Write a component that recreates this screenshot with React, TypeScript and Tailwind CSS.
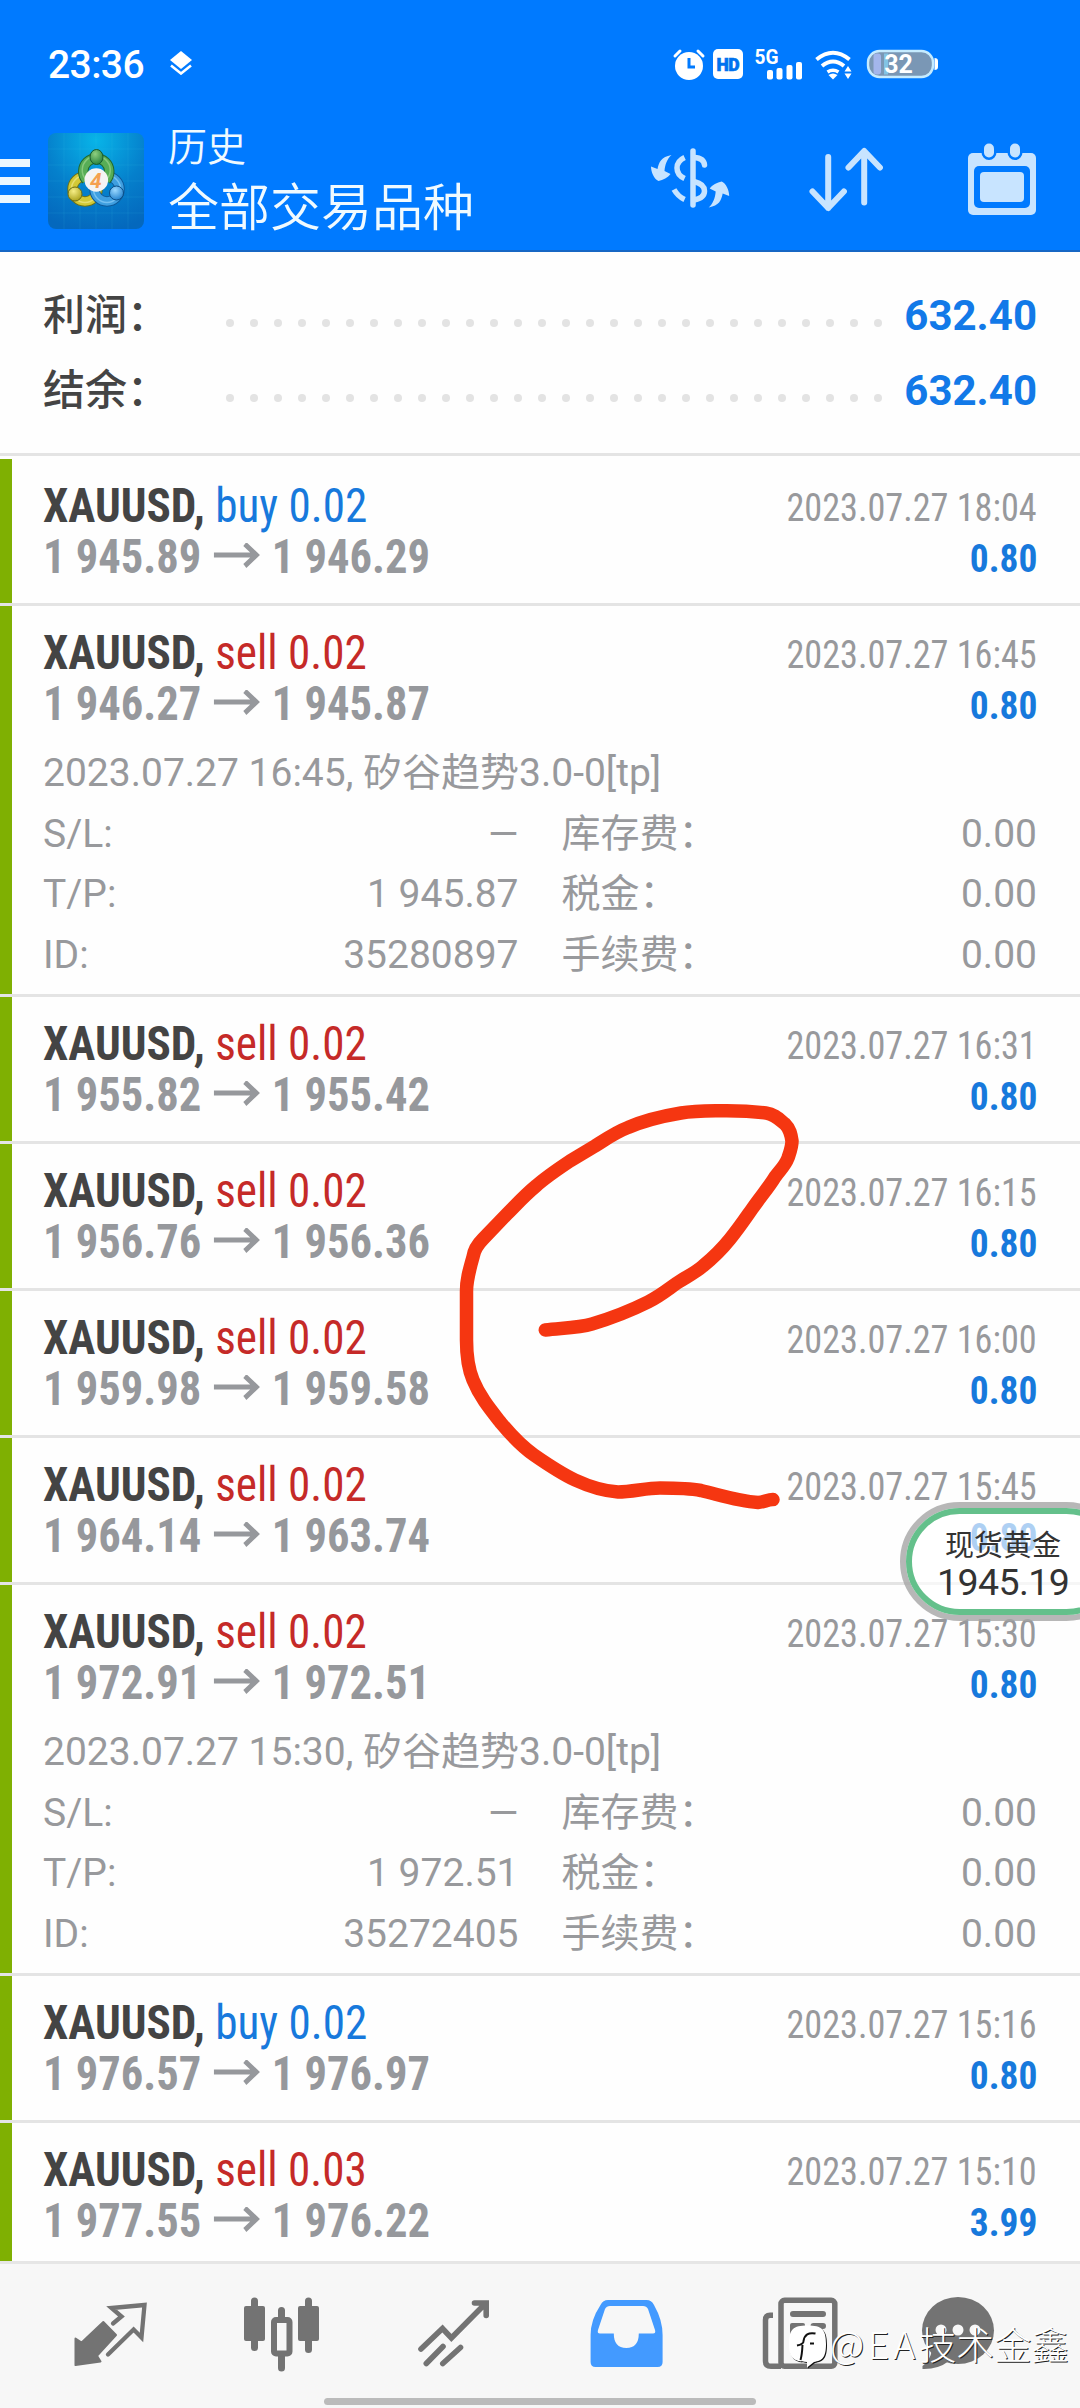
import type { ReactNode } from "react";

type Detail = { comment: string; tp: string; id: string };
type Deal = {
  side: "buy" | "sell";
  lots: string;
  open: string;
  close: string;
  time: string;
  profit: string;
  detail?: Detail;
};

const deals: Deal[] = [
  { side: "buy", lots: "0.02", open: "1 945.89", close: "1 946.29", time: "2023.07.27 18:04", profit: "0.80" },
  {
    side: "sell", lots: "0.02", open: "1 946.27", close: "1 945.87", time: "2023.07.27 16:45", profit: "0.80",
    detail: { comment: "2023.07.27 16:45, 矽谷趋势3.0-0[tp]", tp: "1 945.87", id: "35280897" },
  },
  { side: "sell", lots: "0.02", open: "1 955.82", close: "1 955.42", time: "2023.07.27 16:31", profit: "0.80" },
  { side: "sell", lots: "0.02", open: "1 956.76", close: "1 956.36", time: "2023.07.27 16:15", profit: "0.80" },
  { side: "sell", lots: "0.02", open: "1 959.98", close: "1 959.58", time: "2023.07.27 16:00", profit: "0.80" },
  { side: "sell", lots: "0.02", open: "1 964.14", close: "1 963.74", time: "2023.07.27 15:45", profit: "0.80" },
  {
    side: "sell", lots: "0.02", open: "1 972.91", close: "1 972.51", time: "2023.07.27 15:30", profit: "0.80",
    detail: { comment: "2023.07.27 15:30, 矽谷趋势3.0-0[tp]", tp: "1 972.51", id: "35272405" },
  },
  { side: "buy", lots: "0.02", open: "1 976.57", close: "1 976.97", time: "2023.07.27 15:16", profit: "0.80" },
  { side: "sell", lots: "0.03", open: "1 977.55", close: "1 976.22", time: "2023.07.27 15:10", profit: "3.99" },
];

function StatusBar() {
  return (
    <div className="flex h-[112px] items-center pl-12 pt-[17px]">
      <span className="w-[122px] text-[39px] leading-10 font-medium tracking-[-0.6px]">23:36</span>
      <svg width="22" height="24" viewBox="0 0 22 24" className="mb-1" fill="#fff">
        <path d="M11 0 22 9 11 18 0 9z" />
        <path d="M1 14.5 11 22.5 21 14.5" fill="none" stroke="#fff" strokeWidth="2.6" />
      </svg>
      <svg width="270" height="48" viewBox="672 40 270 48" className="ml-[479px]" fill="#fff">
        <circle cx="690" cy="65" r="14" />
        <path d="M676 55 681 50M704 55 699 50" stroke="#fff" strokeWidth="3" strokeLinecap="round" />
        <path d="M690 57v9h6" fill="none" stroke="#007aff" strokeWidth="3" />
        <rect x="714" y="48" width="30" height="30" rx="5" />
        <text x="729" y="69.5" textAnchor="middle" fontSize="17.5" fontWeight="900" fill="#0072ee" stroke="#0072ee" strokeWidth=".6" textLength="23">HD</text>
        <text x="755.5" y="62.5" fontSize="20" fontWeight="700" textLength="24" lengthAdjust="spacingAndGlyphs">5G</text>
        <rect x="768" y="69" width="6" height="9.500" rx="2" />
        <rect x="777.500" y="67" width="6" height="11.500" rx="2" />
        <rect x="787.500" y="64" width="6" height="14.500" rx="2" />
        <rect x="797" y="61" width="6" height="17.500" rx="2" />
        <g fill="none" stroke="#fff" strokeWidth="4">
          <path d="M817.500 58.500Q834 45 850.500 58.500" />
          <path d="M823 65Q834 56 845 65" />
          <path d="M828.500 71Q834 67.500 839.500 71" strokeWidth="3.500" />
        </g>
        <path d="M829.500 74Q834 71 838.500 74L834 78.500z" />
        <path d="M849 65 852.500 70.500h-7zM849 78 852.500 72.500h-7z" />
        <rect x="869" y="50" width="65" height="26" rx="11.500" fill="#7a97b5" stroke="#c5ebff" strokeWidth="2.400" />
        <rect x="874.500" y="52.500" width="7.500" height="21" rx="3" fill="#a3b6ec" />
        <rect x="885" y="52.500" width="4" height="21" fill="#82c3e4" />
        <path d="M935.500 57q3.500 0 3.500 3v6q0 3-3.500 3z" />
        <text x="899.500" y="72" textAnchor="middle" fontSize="25" fontWeight="700">32</text>
      </svg>
    </div>
  );
}

function AppLogo() {
  return (
    <svg width="96" height="96" viewBox="0 0 96 96" className="ml-[18px]">
      <defs>
        <radialGradient id="tile" cx=".5" cy=".08" r=".95">
          <stop offset="0" stopColor="#08b4e8" />
          <stop offset=".55" stopColor="#0580cc" />
          <stop offset="1" stopColor="#0468bd" />
        </radialGradient>
        <radialGradient id="g" cx=".4" cy=".3" r=".8">
          <stop offset="0" stopColor="#8fcf80" />
          <stop offset="1" stopColor="#1c7a35" />
        </radialGradient>
        <radialGradient id="y" cx=".4" cy=".3" r=".8">
          <stop offset="0" stopColor="#f6ee86" />
          <stop offset="1" stopColor="#a39a10" />
        </radialGradient>
        <radialGradient id="b" cx=".4" cy=".3" r=".8">
          <stop offset="0" stopColor="#9ad8ff" />
          <stop offset="1" stopColor="#1679c9" />
        </radialGradient>
      </defs>
      <rect width="96" height="96" rx="8" fill="url(#tile)" />
      <path d="M16 0v96M32 0v96M48 0v96M64 0v96M80 0v96M0 16h96M0 32h96M0 48h96M0 64h96M0 80h96" stroke="#4cc6f2" strokeOpacity=".12" strokeWidth="1" />
      <g fill="none">
        <circle cx="37" cy="56" r="12.500" stroke="#6d7218" strokeWidth="10.500" />
        <circle cx="37" cy="56" r="12.500" stroke="#d3c936" strokeWidth="8.500" />
        <circle cx="37" cy="56" r="13.500" stroke="#e6de72" strokeWidth="1.500" />
        <circle cx="59" cy="56" r="12.500" stroke="#0e5a9a" strokeWidth="10.500" />
        <circle cx="59" cy="56" r="12.500" stroke="#3f9fe0" strokeWidth="8.500" />
        <circle cx="59" cy="56" r="13.500" stroke="#74c0f2" strokeWidth="1.500" />
        <path d="M38.500 47A13 13 0 1 1 58 47" stroke="#22692f" strokeWidth="10.500" />
        <path d="M38.500 47A13 13 0 1 1 58 47" stroke="#57ad56" strokeWidth="8.500" />
        <path d="M37.500 46A14 14 0 1 1 59 46" stroke="#86c87c" strokeWidth="1.500" />
      </g>
      <ellipse cx="48.500" cy="24" rx="6.500" ry="7.500" fill="url(#g)" stroke="#175a2c" strokeWidth="1" />
      <circle cx="27" cy="61" r="7" fill="url(#y)" stroke="#6c6c14" strokeWidth="1" />
      <circle cx="68.500" cy="60" r="7" fill="url(#b)" stroke="#0b4d86" strokeWidth="1" />
      <circle cx="48.300" cy="47" r="11.800" fill="#f4f3f4" />
      <text x="47.800" y="54.500" textAnchor="middle" fontSize="21" fontWeight="700" fontStyle="italic" fill="#f5a050">4</text>
    </svg>
  );
}

function Header() {
  const swap =
    "M671.500 155C661 157 659 162 657.500 169L651 166.500C651 172 654 179 658.500 181C663 180 668 177.500 670.500 174L664.500 171C665 165 667 159 671.500 155z";
  return (
    <header className="h-[252px] shrink-0 border-b-2 border-[#1767c4] bg-[#007aff] text-white">
      <StatusBar />
      <div className="flex h-[138px] items-center pr-9">
        <div className="flex flex-col gap-[10px]">
          <i className="h-2 w-[30px] bg-[#ebf7ff]" />
          <i className="h-2 w-[30px] bg-[#ebf7ff]" />
          <i className="h-2 w-[30px] bg-[#ebf7ff]" />
        </div>
        <AppLogo />
        <div className="ml-6 flex flex-col pb-[15px] font-['Noto_Sans_CJK_SC',sans-serif] font-[350] text-[#f0faff]">
          <span className="text-[39px] leading-[60px]">历史</span>
          <span className="text-[51px] leading-[60px]">全部交易品种</span>
        </div>
        <div className="ml-auto flex gap-[72px]">
          <svg width="84" height="84" viewBox="648 139 84 84" fill="#c8e4ff">
            <path d={swap} />
            <path d={swap} transform="rotate(180 690.1 181.2)" />
            <g fill="none" stroke="#c8e4ff" strokeWidth="5.500">
              <path d="M693 151v54" strokeLinecap="round" />
              <path d="M694 157.500Q704 158 704.500 165" strokeLinecap="round" />
              <path d="M694 181.500Q704.500 184 704.500 191Q704.500 198 694 200" />
              <path d="M684.600 157.500Q677 161 677 168Q677 175 684.600 178.500" />
              <path d="M674 189.500Q678 196.500 684.600 199.500" />
            </g>
          </svg>
          <svg width="84" height="84" viewBox="804 139 84 84" fill="none" stroke="#c8e4ff" strokeWidth="6" strokeLinecap="round" strokeLinejoin="round">
            <path d="M828.200 157v51M812.500 191.500 828.200 208 843.900 191.500" />
            <path d="M864.200 202.500v-51M848.500 167.500 864.200 151 879.900 167.500" />
          </svg>
          <svg width="84" height="84" viewBox="960 139 84 84" fill="#c8e4ff">
            <rect x="968" y="153" width="68" height="62" rx="5" />
            <rect x="974" y="166" width="56" height="42" rx="5" fill="#007aff" />
            <rect x="980" y="172" width="44" height="30" rx="4" />
            <g stroke="#007aff" strokeWidth="5" paintOrder="stroke">
              <rect x="984" y="143.500" width="10" height="14" rx="5" />
              <rect x="1010" y="143.500" width="10" height="14" rx="5" />
            </g>
          </svg>
        </div>
      </div>
    </header>
  );
}

function SummaryRow({ label, value }: { label: string; value: string }) {
  return (
    <div className="flex h-[75px] items-center justify-between">
      <span className="w-[183px] pb-[2px] font-['Noto_Sans_CJK_SC',sans-serif] text-[42px] leading-[73px] font-medium text-[#444]">{label}</span>
      <div className="mt-[20px] mr-auto flex gap-4">
        {Array.from({ length: 28 }, (_, i) => (
          <i key={i} className="size-2 rounded-full bg-[#e3e3e3]" />
        ))}
      </div>
      <span className="pt-[7px] text-[42px] leading-[68px] font-bold text-[#1279e8]">{value}</span>
    </div>
  );
}

function DetailRow({ label, value, label2, value2 }: { label: string; value: string; label2: string; value2: string }) {
  return (
    <div className="grid grid-cols-2 gap-x-[43px]">
      <div className="flex justify-between">
        <span>{label}</span>
        <span>{value}</span>
      </div>
      <div className="flex justify-between">
        <span>{label2}</span>
        <span>{value2}</span>
      </div>
    </div>
  );
}

function DealRow({ deal }: { deal: Deal }) {
  return (
    <div className="shrink-0 border-b-[3px] border-[#e4e4e4]">
      <div className="border-l-[12px] border-[#7fb002] pr-[43px] pl-[31px]">
        <div className={deal.detail ? "flex h-[137px] justify-between" : "flex h-[144px] justify-between"}>
          <div className="flex flex-col pt-[21px] leading-[51px] font-stretch-condensed">
            <div className="origin-left scale-x-[0.922] text-[49px] whitespace-pre">
              <span className="font-bold text-[#444]">XAUUSD, </span>
              <span className={deal.side === "buy" ? "text-[#1779dc]" : "text-[#c52a28]"}>
                {deal.side} {deal.lots}
              </span>
            </div>
            <div className="flex origin-left scale-x-[0.928] items-center text-[48px] font-bold text-[#96989c]">
              <span>{deal.open}</span>
              <svg width="50" height="28" viewBox="0 0 50 28" className="mx-[13px]" fill="none" stroke="#96989c" strokeWidth="5">
                <path d="M0 12h46M33.500 1 46 12 33.500 23" />
              </svg>
              <span>{deal.close}</span>
            </div>
          </div>
          <div className="flex flex-col items-end pt-[24.400px] text-[39px] leading-[51px] font-stretch-condensed">
            <span className="origin-right scale-x-[0.928] text-[#98999c]">{deal.time}</span>
            <span className="origin-right scale-x-[0.96] font-bold text-[#1779dc]">{deal.profit}</span>
          </div>
        </div>
        {deal.detail && (
          <div className="h-[251px] text-[39px] leading-[60.5px] text-[#98999c]">
            <div>{deal.detail.comment}</div>
            <DetailRow label="S/L:" value="—" label2="库存费：" value2="0.00" />
            <DetailRow label="T/P:" value={deal.detail.tp} label2="税金：" value2="0.00" />
            <DetailRow label="ID:" value={deal.detail.id} label2="手续费：" value2="0.00" />
          </div>
        )}
      </div>
    </div>
  );
}

function TabIcon({ index, children }: { index: number; children: ReactNode }) {
  return (
    <svg width="172" height="144" viewBox={`${24 + index * 172} 24 172 144`} fill="#737373" className="shrink-0">
      {children}
    </svg>
  );
}

function TabBar() {
  return (
    <nav className="relative flex h-[147px] shrink-0 border-t-[3px] border-[#e6e6e6] bg-[#f7f7f7] pl-6">
      <TabIcon index={0}>
        <path d="M103.300 82 116 95 97 115.700 100.500 121.500 75.500 125 75.500 98.500 81.600 102.500z" stroke="#737373" strokeWidth="2" strokeLinejoin="round" />
        <path d="M113 83.500 121.500 76.500 111.500 68 144.500 65 141.500 97.500 133.600 89.500 108 114.500" fill="none" stroke="#737373" strokeWidth="4.300" strokeLinecap="round" />
      </TabIcon>
      <TabIcon index={1}>
        <rect x="244" y="66" width="21" height="35" rx="2" />
        <rect x="298" y="66" width="21" height="35" rx="2" />
        <path d="M254.500 61v46.500M308.500 61v48.500M281.500 70.500v10M281.500 116v12" stroke="#737373" strokeWidth="7" strokeLinecap="round" />
        <rect x="274" y="80" width="15.500" height="33.500" rx="2" fill="#f7f7f7" stroke="#737373" strokeWidth="6" />
      </TabIcon>
      <TabIcon index={2}>
        <g fill="none" stroke="#737373" strokeWidth="5.600" strokeLinecap="round">
          <path d="M421 109 442.500 88.500 451.400 98 485.500 63.500M474.500 63H486.200V75.500" />
          <path d="M443 106.500 426.300 123.500M460.500 107.500 442.800 123.500" />
        </g>
      </TabIcon>
      <TabIcon index={3}>
        <path
          fillRule="evenodd"
          fill="#439aff"
          d="M608 60H646.500Q651.500 60 654 65Q662.600 80 662.600 95V122Q662.600 127 657.600 127H595.600Q590.600 127 590.600 122V95Q590.600 80 600.500 65Q603 60 608 60ZM610 66Q606.500 66 605 69L598 90Q597 93.500 600 93.500H613.800Q613.800 108 626.300 108Q638.800 108 638.800 93.500H653Q656 93.500 655 90L648 69Q646.500 66 643 66Z"
        />
      </TabIcon>
      <TabIcon index={4}>
        <g fill="none" stroke="#737373" strokeWidth="5.500">
          <rect x="781" y="60.300" width="53.800" height="66" rx="3.500" />
          <path d="M773 75.200H770Q765.500 75.200 765.500 80V121Q765.500 126.300 771 126.300H781" />
          <path d="M793 74H823M813.500 86H823" strokeWidth="6" strokeLinecap="round" />
        </g>
        <rect x="790" y="83" width="15" height="16" rx="2" />
      </TabIcon>
      <TabIcon index={5}>
        <ellipse cx="958" cy="90.500" rx="36" ry="33.500" />
        <path d="M932 110Q930 121 922.500 126V129Q938 129.500 949 121z" />
        <circle cx="941" cy="90" r="5.500" fill="#f7f7f7" />
        <circle cx="958" cy="90" r="5.500" fill="#f7f7f7" />
        <circle cx="975" cy="90" r="5.500" fill="#f7f7f7" />
      </TabIcon>
      <i className="absolute bottom-[3px] left-[324px] h-[7px] w-[432px] rounded-full bg-[#bbb]" />
    </nav>
  );
}

function Watermark() {
  return (
    <div className="absolute right-[11px] bottom-[36px] flex h-[50px] items-center text-white">
      <svg width="42" height="48" viewBox="788 86 42 48" className="shrink-0">
        <path
          d="M809.500 88.500C824 88.500 828 92.500 828 107C828 120.500 824.500 123.500 816 125L809 130.500V125C795 124.500 791 120.500 791 107C791 92.500 795 88.500 809.500 88.500Z"
          fill="#111"
          transform="translate(1 1)"
        />
        <path d="M809.500 88.500C824 88.500 828 92.500 828 107C828 120.500 824.500 123.500 816 125L809 130.500V125C795 124.500 791 120.500 791 107C791 92.500 795 88.500 809.500 88.500Z" fill="#fff" />
        <path d="M817.500 96.500Q807 94.500 805.500 104Q806 107 799 108.500M804.500 108Q804 118 802.500 123M812 106.500H816" fill="none" stroke="#111" strokeWidth="2" />
      </svg>
      <span className="pb-[9px] pl-[2px] font-['Noto_Sans_CJK_SC',sans-serif] text-[37.5px] leading-[41px] font-light [text-shadow:1px_1px_0_#222]">
        <span className="tracking-[3.8px]">@EA</span>技术金鑫
      </span>
    </div>
  );
}

export default function App() {
  return (
    <div className="relative flex h-[2408px] w-[1080px] flex-col overflow-hidden bg-[#fefefe] font-[Roboto,'Noto_Sans_CJK_SC',sans-serif]">
      <Header />
      <section className="h-[204px] shrink-0 border-b-[3px] border-[#e4e4e4] pt-[23px] pr-[43px] pl-[43px]">
        <SummaryRow label="利润：" value="632.40" />
        <SummaryRow label="结余：" value="632.40" />
      </section>
      <main className="mt-[3px] flex h-[1802px] shrink-0 flex-col overflow-hidden">
        {deals.map((d) => (
          <DealRow key={d.time} deal={d} />
        ))}
      </main>
      <TabBar />

      {/* freehand marker stroke */}
      <svg className="absolute top-[1090px] left-[450px]" width="360" height="430" viewBox="450 1090 360 430" fill="none" stroke="#f53611" strokeWidth="13.500" strokeLinecap="round" strokeLinejoin="round">
        <path d="M545.300 1330C562 1328 578 1328 592 1324C612 1318 632 1310 648 1302C660 1296 667 1290 677 1283C686 1277 695 1273 703 1266C714 1257 722 1249 730 1239C739 1228 745 1219 752 1209C761 1196 769 1187 775 1177C780 1170 785 1166 788 1158C790 1152 792 1147 792 1141C791 1134 790 1129 785 1124C779 1119 774 1114 766 1113C751 1111 736 1110.500 721 1110.700C707 1111 694 1111 681 1113C663 1116 643 1121 628 1127.500C616 1132 606 1139 595 1146L570 1161C558 1169 546 1177 536 1186C525 1195 516 1205 507 1214L483 1239C477 1245 474 1250 473 1257C469 1271 466.500 1280 466.500 1291V1340C466.500 1355 468 1368 473 1380C480 1397 490 1409 501 1423C511 1435 521 1446 534 1455C547 1464 560 1473 575 1480C588 1486 603 1491 618 1492C632 1492 646 1488 660 1488C674 1488 688 1488 701 1490.500C720 1495 738 1501 758 1502.500C764 1502 768 1499.500 773 1499.600" />
      </svg>

      {/* floating quote widget */}
      <div className="absolute top-[1502px] left-[900px] w-[226px] rounded-[64px] border-[6.5px] border-[#a5a5a5]/80">
        <div className="flex h-[107px] flex-col rounded-[54px] border-6 border-[#64c08b] bg-white/65 pt-[10px] pl-[25px] text-[#333]">
          <span className="pl-2 font-['Noto_Sans_CJK_SC',sans-serif] text-[29px] leading-[38px]">现货黄金</span>
          <span className="pt-px text-[37.5px] leading-[38px] tracking-[-0.6px]">1945.19</span>
        </div>
      </div>

      <Watermark />
    </div>
  );
}
